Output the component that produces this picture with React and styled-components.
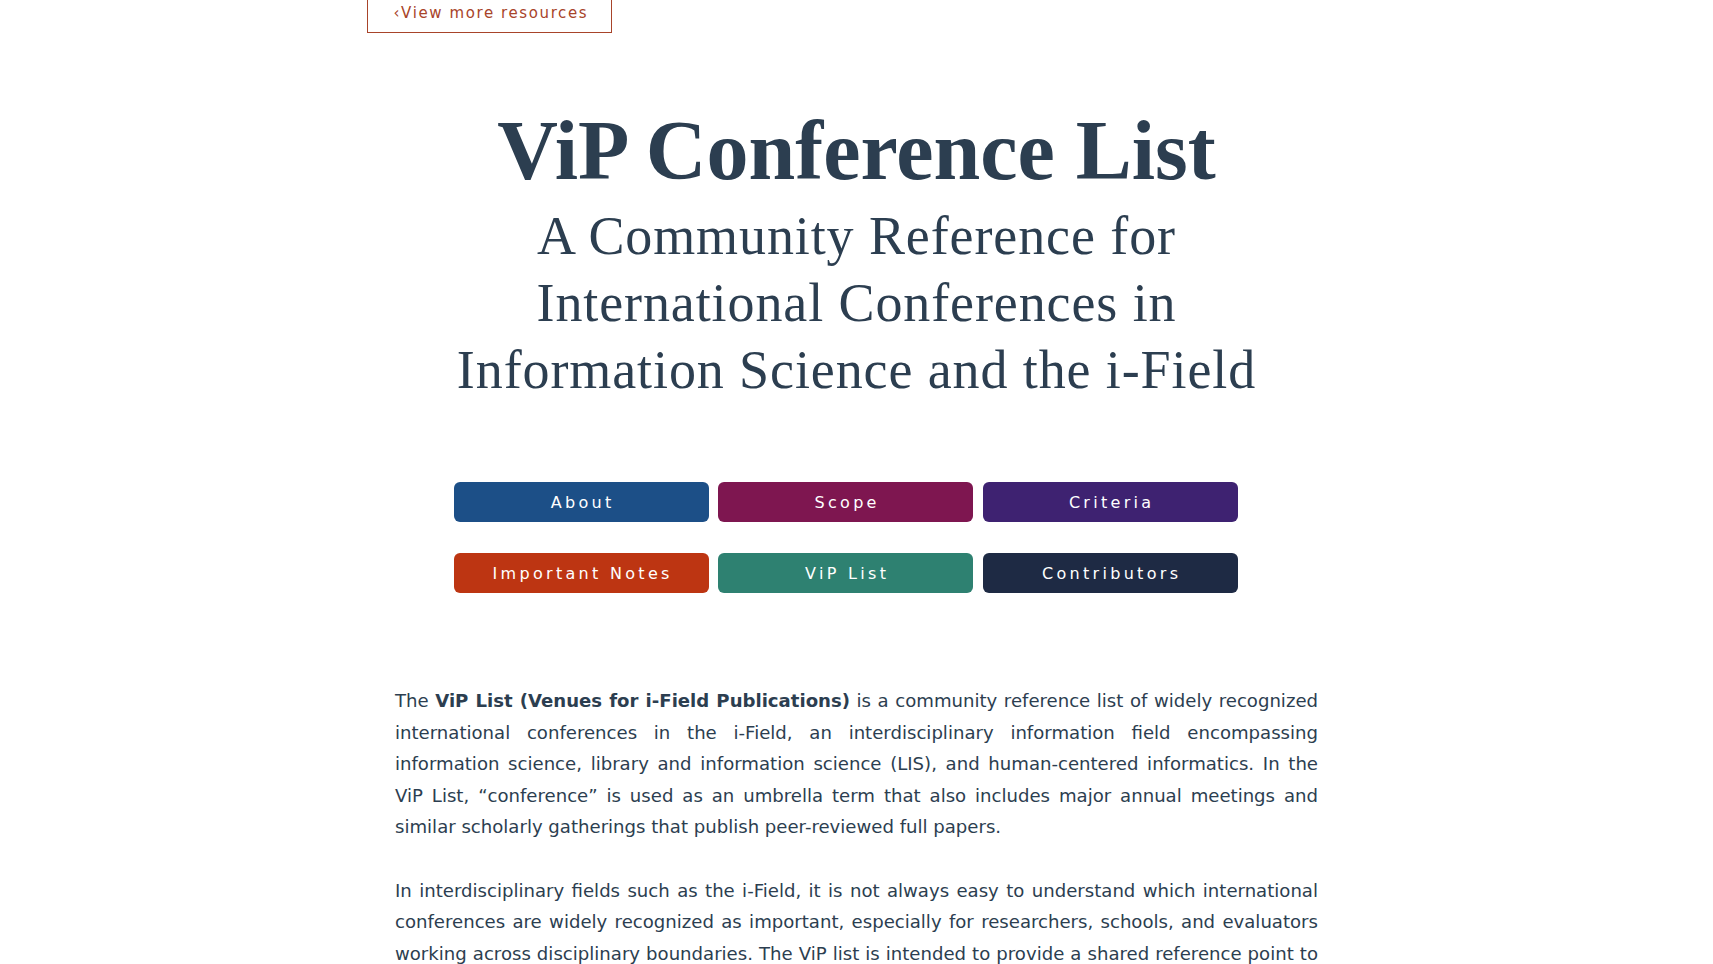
import React from 'react'
import styled, { createGlobalStyle } from 'styled-components'

const GlobalStyle = createGlobalStyle`
  html, body {
    margin: 0;
    padding: 0;
    background: #ffffff;
  }
  body {
    font-family: "DejaVu Sans", Verdana, sans-serif;
    color: #2c3e50;
  }
`

const Page = styled.div`
  margin: -8px auto 0;
  max-width: 980px;
`

const BackLink = styled.a`
  border: 1px solid #a8442a;
  color: #a8442a;
  display: inline-block;
  font-size: 15px;
  letter-spacing: 1.6px;
  line-height: 20px;
  padding: 10px 23px 9px 26px;
  text-decoration: none;
`

const Header = styled.header`
  margin-top: 70px;
  text-align: center;
`

const Title = styled.h1`
  color: #2c3e50;
  font-family: "Liberation Serif", "Times New Roman", serif;
  font-size: 84px;
  font-weight: 700;
  line-height: 96px;
  margin: 0;
`

const Subtitle = styled.h2`
  color: #2c3e50;
  font-family: "Liberation Serif", "Times New Roman", serif;
  font-size: 54px;
  font-weight: 400;
  letter-spacing: 0.9px;
  line-height: 67px;
  margin: 4px 0 0;
`

const Nav = styled.nav`
  display: grid;
  gap: 31px 9.5px;
  grid-template-columns: repeat(3, 255px);
  margin: 78px auto 0;
  padding-right: 22px;
  width: 784px;
`

const NavButton = styled.a`
  align-items: center;
  background-color: ${p => p.$color};
  border-radius: 6px;
  color: #ffffff;
  display: flex;
  font-size: 16px;
  height: 40px;
  justify-content: center;
  letter-spacing: 3.3px;
  text-decoration: none;
  text-indent: 3.3px;
`

const Body = styled.section`
  margin-top: 92px;
  padding: 0 28.5px;
`

const Paragraph = styled.p`
  font-size: 18.1px;
  line-height: 31.5px;
  margin: 0 0 32px;
  text-align: justify;
`

const buttons = [
  { label: 'About', color: '#1c4f87' },
  { label: 'Scope', color: '#7e1650' },
  { label: 'Criteria', color: '#3e2271' },
  { label: 'Important Notes', color: '#bd3512' },
  { label: 'ViP List', color: '#2e8171' },
  { label: 'Contributors', color: '#1e2a44' }
]

export default function App() {
  return (
    <>
      <GlobalStyle />
      <Page>
        <BackLink href="#">‹View more resources</BackLink>
        <Header>
          <Title>ViP Conference List</Title>
          <Subtitle>
            A Community Reference for<br />
            International Conferences in<br />
            Information Science and the i-Field
          </Subtitle>
        </Header>
        <Nav>
          {buttons.map(b => (
            <NavButton key={b.label} href="#" $color={b.color}>{b.label}</NavButton>
          ))}
        </Nav>
        <Body>
          <Paragraph>
            The <strong>ViP List (Venues for i-Field Publications)</strong> is a community reference list of widely
            recognized international conferences in the i-Field, an interdisciplinary information field encompassing
            information science, library and information science (LIS), and human-centered informatics. In the ViP
            List, “conference” is used as an umbrella term that also includes major annual meetings and similar
            scholarly gatherings that publish peer-reviewed full papers.
          </Paragraph>
          <Paragraph>
            In interdisciplinary fields such as the i-Field, it is not always easy to understand which international
            conferences are widely recognized as important, especially for researchers, schools, and evaluators
            working across disciplinary boundaries. The ViP list is intended to provide a shared reference point to
            support fair and informed discussions about scholarly venues across the i-Field.
          </Paragraph>
        </Body>
      </Page>
    </>
  )
}
